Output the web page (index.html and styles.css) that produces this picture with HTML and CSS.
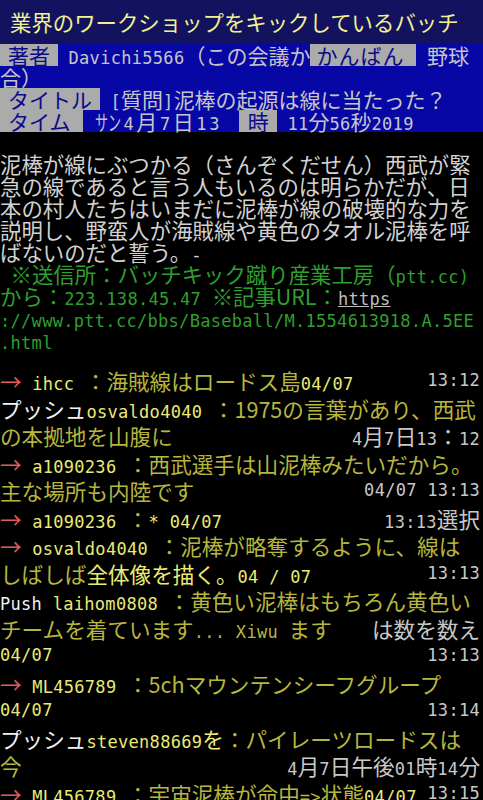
FILE: index.html
```html
<!DOCTYPE html>
<html lang="ja">
<head>
<meta charset="utf-8">
<title>PTT</title>
<link rel="stylesheet" href="styles.css">
</head>
<body>
<div class="screen">
  <div class="title">業界のワークショップをキックしているバッチ</div>
  <div class="head">
    <div class="hrow"><span class="lbl">著者</span><span class="hv"><span class="a"> Davichi5566</span>（この会議か</span><span class="lbl lbl-board">かんばん</span><span class="hv"><span class="a"> </span>野球</span></div>
    <div class="hrow"><span class="hv">合）</span></div>
    <div class="hrow"><span class="lbl">タイトル</span><span class="hv"><span class="a"> [</span>質問<span class="a">]</span>泥棒の起源は線に当たった？</span></div>
    <div class="hrow"><span class="lbl lbl-time">タイム</span><span class="hv wide"><span class="a"> </span><span class="narrow">サン</span><span class="a">4</span>月<span class="a">7</span>日<span class="a">13 </span></span><span class="lbl lbl-hour">時</span><span class="hv"><span class="a"> 11</span>分<span class="a">56</span>秒<span class="a">2019</span></span></div>
  </div>

  <div class="post">
    <div class="pl">泥棒が線にぶつかる（さんぞくだせん）西武が緊</div>
    <div class="pl">急の線であると言う人もいるのは明らかだが、日</div>
    <div class="pl">本の村人たちはいまだに泥棒が線の破壊的な力を</div>
    <div class="pl">説明し、野蛮人が海賊線や黄色のタオル泥棒を呼</div>
    <div class="pl">ばないのだと誓う。<span class="a">-</span></div>
    <div class="pl gr"><span class="a"> </span>※送信所：バッチキック蹴り産業工房（<span class="a">ptt.cc)</span></div>
    <div class="pl gr">から：<span class="a">223.138.45.47 </span>※記事URL：<span class="a url">https</span></div>
    <div class="pl gr"><span class="a">://www.ptt.cc/bbs/Baseball/M.1554613918.A.5EE</span></div>
    <div class="pl gr"><span class="a">.html</span></div>
  </div>

  <div class="push">
    <div class="cl"><span><span class="r">→</span><span class="y a"> ihcc </span><span class="o">：海賊線はロードス島</span><span class="y a">04/07</span></span><span class="t a">13:12</span></div>
    <div class="cl"><span><span class="w">プッシュ</span><span class="y a">osvaldo4040 </span><span class="o">：1975の言葉があり、西武</span></span></div>
    <div class="cl"><span class="o">の本拠地を山腹に</span><span class="t"><span class="a">4</span>月<span class="a">7</span>日<span class="a">13</span>：<span class="a">12</span></span></div>
    <div class="cl"><span><span class="r">→</span><span class="y a"> a1090236 </span><span class="o">：西武選手は山泥棒みたいだから。</span></span></div>
    <div class="cl"><span class="o">主な場所も内陸です</span><span class="t a">04/07 13:13</span></div>
    <div class="cl"><span><span class="r">→</span><span class="y a"> a1090236 </span><span class="o">：</span><span class="y a">* 04/07</span></span><span class="t"><span class="a">13:13</span>選択</span></div>
    <div class="cl"><span><span class="r">→</span><span class="y a"> osvaldo4040 </span><span class="o">：泥棒が略奪するように、線は</span></span></div>
    <div class="cl"><span><span class="o">しばしば</span><span class="y">全体像を描く。<span class="a">04 / 07</span></span></span><span class="t a">13:13</span></div>
    <div class="cl"><span><span class="w a">Push </span><span class="y a">laihom0808 </span><span class="o">：黄色い泥棒はもちろん黄色い</span></span></div>
    <div class="cl"><span class="o">チームを着ています<span class="a">... Xiwu </span>ます</span><span class="t">は数を数え</span></div>
    <div class="cl"><span class="y a">04/07</span><span class="t a">13:13</span></div>
    <div class="cl"><span><span class="r">→</span><span class="y a"> ML456789 </span><span class="o">：5chマウンテンシーフグループ</span></span></div>
    <div class="cl"><span class="y a">04/07</span><span class="t a">13:14</span></div>
    <div class="cl"><span><span class="w">プッシュ</span><span class="y"><span class="a">steven88669</span>を</span><span class="o">：パイレーツロードスは</span></span></div>
    <div class="cl"><span class="o">今</span><span class="t"><span class="a">4</span>月<span class="a">7</span>日午後<span class="a">01</span>時<span class="a">14</span>分</span></div>
    <div class="cl"><span><span class="r">→</span><span class="y a"> ML456789 </span><span class="o">：宇宙泥棒が命中<span class="a">=></span>状態</span><span class="y a">04/07</span></span><span class="t a">13:15</span></div>
  </div>
</div>
</body>
</html>
```

FILE: styles.css
```css
html, body {
  margin: 0;
  padding: 0;
  background: #000;
}

body {
  width: 483px;
  height: 800px;
  overflow: hidden;
  font-family: "Noto Sans CJK JP", "Noto Sans", sans-serif;
}

.screen {
  width: 483px;
}

.a {
  font-family: "DejaVu Sans Mono", "Noto Sans CJK JP", monospace;
  font-size: 17px;
  letter-spacing: 0.3px;
}

/* title bar */
.title {
  height: 44px;
  line-height: 44px;
  padding-left: 10px;
  background: #12125e;
  color: #f2f290;
  font-size: 21.4px;
  white-space: pre;
}

/* header */
.head {
  background: #0707a6;
  color: #c6c6c6;
  font-size: 21px;
}

.hrow {
  display: flex;
  height: 22px;
  line-height: 22px;
  white-space: pre;
}

.lbl {
  background: #ababab;
  color: #0a0a8a;
  padding: 0 8px;
}

.lbl-board {
  padding: 0 12px 0 6px;
  letter-spacing: 1px;
}

.lbl-time {
  padding: 0 12px 0 8px;
}

.lbl-hour {
  margin-left: 4px;
  padding: 0 8px 0 9px;
}

.wide,
.wide .a {
  letter-spacing: 2.6px;
}

.narrow {
  display: inline-block;
  width: 28px;
  letter-spacing: 0;
  transform: scaleX(0.62);
  transform-origin: 0 50%;
}

/* article body */
.post {
  padding-top: 21px;
  font-size: 21.4px;
  color: #d2d2d2;
}

.pl {
  height: 22px;
  line-height: 22px;
  white-space: pre;
}

.gr {
  color: #2f9f2f;
}

.url {
  color: #bebebe;
  text-decoration: underline;
}

/* push comments */
.push {
  margin-top: 16px;
  font-size: 21.6px;
}

.cl {
  display: flex;
  justify-content: space-between;
  height: 27.5px;
  line-height: 27.5px;
  padding-right: 3px;
  white-space: pre;
}

.r { color: #e05c5c; }
.y { color: #eaea74; }
.o { color: #b6b63e; }
.t { color: #c8c8c8; }
.w { color: #f2f2f2; }
```
